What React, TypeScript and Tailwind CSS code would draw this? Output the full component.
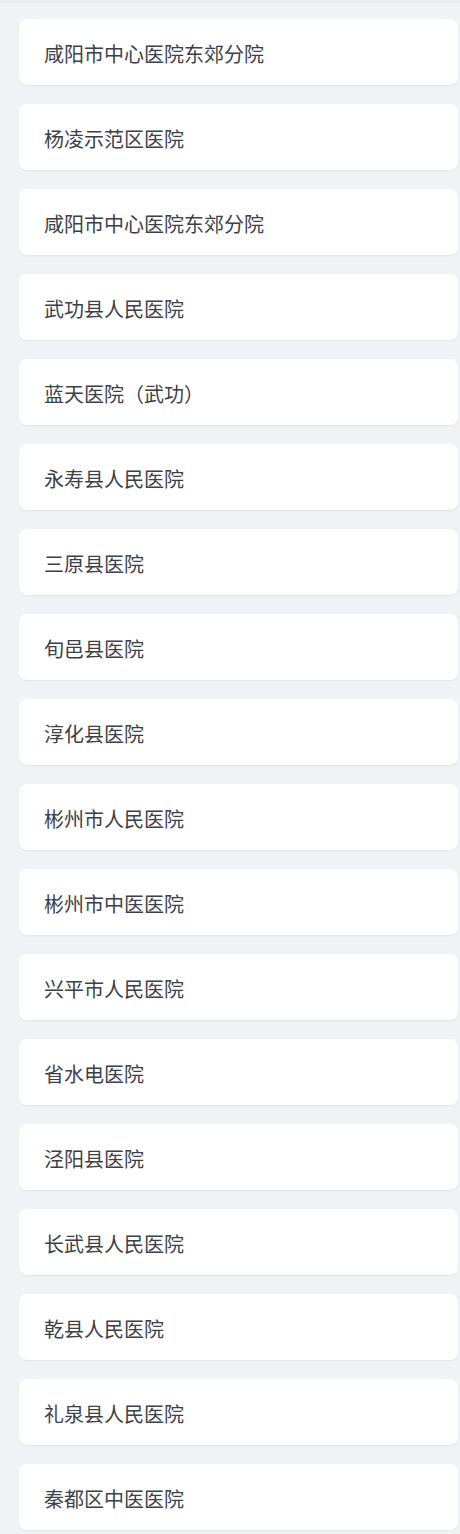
import React from "react";

const items = [
  "咸阳市中心医院东郊分院",
  "杨凌示范区医院",
  "咸阳市中心医院东郊分院",
  "武功县人民医院",
  "蓝天医院（武功）",
  "永寿县人民医院",
  "三原县医院",
  "旬邑县医院",
  "淳化县医院",
  "彬州市人民医院",
  "彬州市中医医院",
  "兴平市人民医院",
  "省水电医院",
  "泾阳县医院",
  "长武县人民医院",
  "乾县人民医院",
  "礼泉县人民医院",
  "秦都区中医医院",
];

export default function App() {
  return (
    <div
      className="min-h-[1534px] w-[460px] bg-[#eff3f6] border-t-[3px] border-[#e8edf1] pt-[16px] pl-[19px] pr-[2px] pb-[4px] flex flex-col gap-[19px]"
      style={{ fontFamily: '"Noto Sans CJK SC", "Noto Sans", sans-serif' }}
    >
      {items.map((t, i) => (
        <div
          key={i}
          className="h-[66px] bg-white rounded-[8px] shadow-[0_1px_2px_rgba(0,0,0,0.06)] flex items-center pl-[25px] pt-[4px] text-[20px] leading-none text-[#3c3f48]"
        >
          {t}
        </div>
      ))}
    </div>
  );
}
